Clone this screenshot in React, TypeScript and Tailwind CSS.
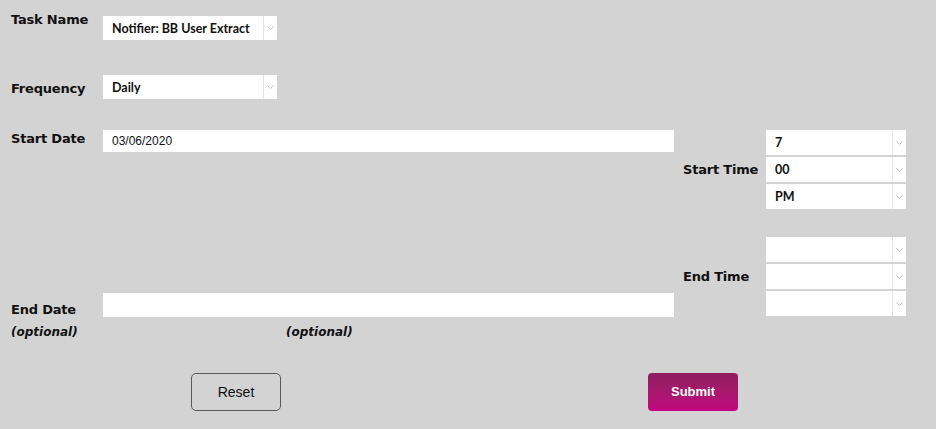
import React from 'react'

const label = "text-[13px] font-bold text-[#111] [font-family:'DejaVu_Sans',sans-serif] tracking-[-0.2px]"

function Chevron() {
  return (
    <svg width="7" height="4" viewBox="0 0 7 4" fill="none" stroke="#bdbdbd" strokeWidth="1">
      <path d="M0.5 0.5 L3.5 3.3 L6.5 0.5" />
    </svg>
  )
}

function Select({ value, width, h = 'h-[24px]' }: { value?: string; width: string; h?: string }) {
  return (
    <div className={`flex ${width} ${h} bg-[#e4e4e4] gap-[1px]`}>
      <div className="flex-1 bg-white flex items-center pl-[9px] pt-[2px] whitespace-nowrap text-[12.5px] font-bold text-[#111] [font-family:Lato,sans-serif]">
        {value}
      </div>
      <div className="w-[13px] bg-white flex items-center justify-center">
        <Chevron />
      </div>
    </div>
  )
}

function TimeGroup({ title, values }: { title: string; values: string[] }) {
  return (
    <div className="flex items-center">
      <div className={`${label} w-[83px] pt-[1px]`}>{title}</div>
      <div className="flex flex-col gap-[2px]">
        {values.map((v, i) => (
          <Select key={i} value={v} width="w-[140px]" h="h-[25px]" />
        ))}
      </div>
    </div>
  )
}

export default function App() {
  return (
    <div className="w-[936px] h-[429px] bg-[#d3d3d3] pl-[11px] pt-[16px] overflow-hidden">
      <div className="flex items-start">
        <div className={`${label} w-[92px] -mt-[6px]`}>Task Name</div>
        <Select value="Notifier: BB User Extract" width="w-[174px]" />
      </div>

      <div className="flex items-center mt-[35px]">
        <div className={`${label} w-[92px] pt-[3px]`}>Frequency</div>
        <Select value="Daily" width="w-[174px]" />
      </div>

      <div className="flex mt-[31px]">
        <div className="w-[663px] flex flex-col">
          <div className="flex items-start">
            <div className={`${label} w-[92px] -mt-[1px]`}>Start Date</div>
            <div className="w-[571px] h-[22px] bg-white flex items-center pl-[9px] text-[12px] text-[#111] [font-family:'Liberation_Sans',Arial,sans-serif]">
              03/06/2020
            </div>
          </div>
          <div className="flex items-end mt-[141px]">
            <div className={`${label} w-[92px] -mb-[2px]`}>End Date</div>
            <div className="w-[571px] h-[24px] bg-white" />
          </div>
          <div className="flex mt-[6px] text-[12px] italic font-bold text-[#111] [font-family:'DejaVu_Sans',sans-serif]">
            <div className="w-[275px]">(optional)</div>
            <div>(optional)</div>
          </div>
        </div>

        <div className="ml-[9px] flex flex-col gap-[28px]">
          <TimeGroup title="Start Time" values={['7', '00', 'PM']} />
          <TimeGroup title="End Time" values={['', '', '']} />
        </div>
      </div>

      <div className="flex mt-[32px]">
        <button className="ml-[180px] w-[90px] h-[38px] rounded-[5px] border border-[#5a5a5a] text-[14px] text-[#111] [font-family:'Liberation_Sans',Arial,sans-serif]">
          Reset
        </button>
        <button className="ml-[367px] w-[90px] h-[38px] rounded-[4px] bg-gradient-to-b from-[#8e1e5e] to-[#c2057f] text-white text-[13px] font-bold [font-family:'Liberation_Sans',Arial,sans-serif]">
          Submit
        </button>
      </div>
    </div>
  )
}
